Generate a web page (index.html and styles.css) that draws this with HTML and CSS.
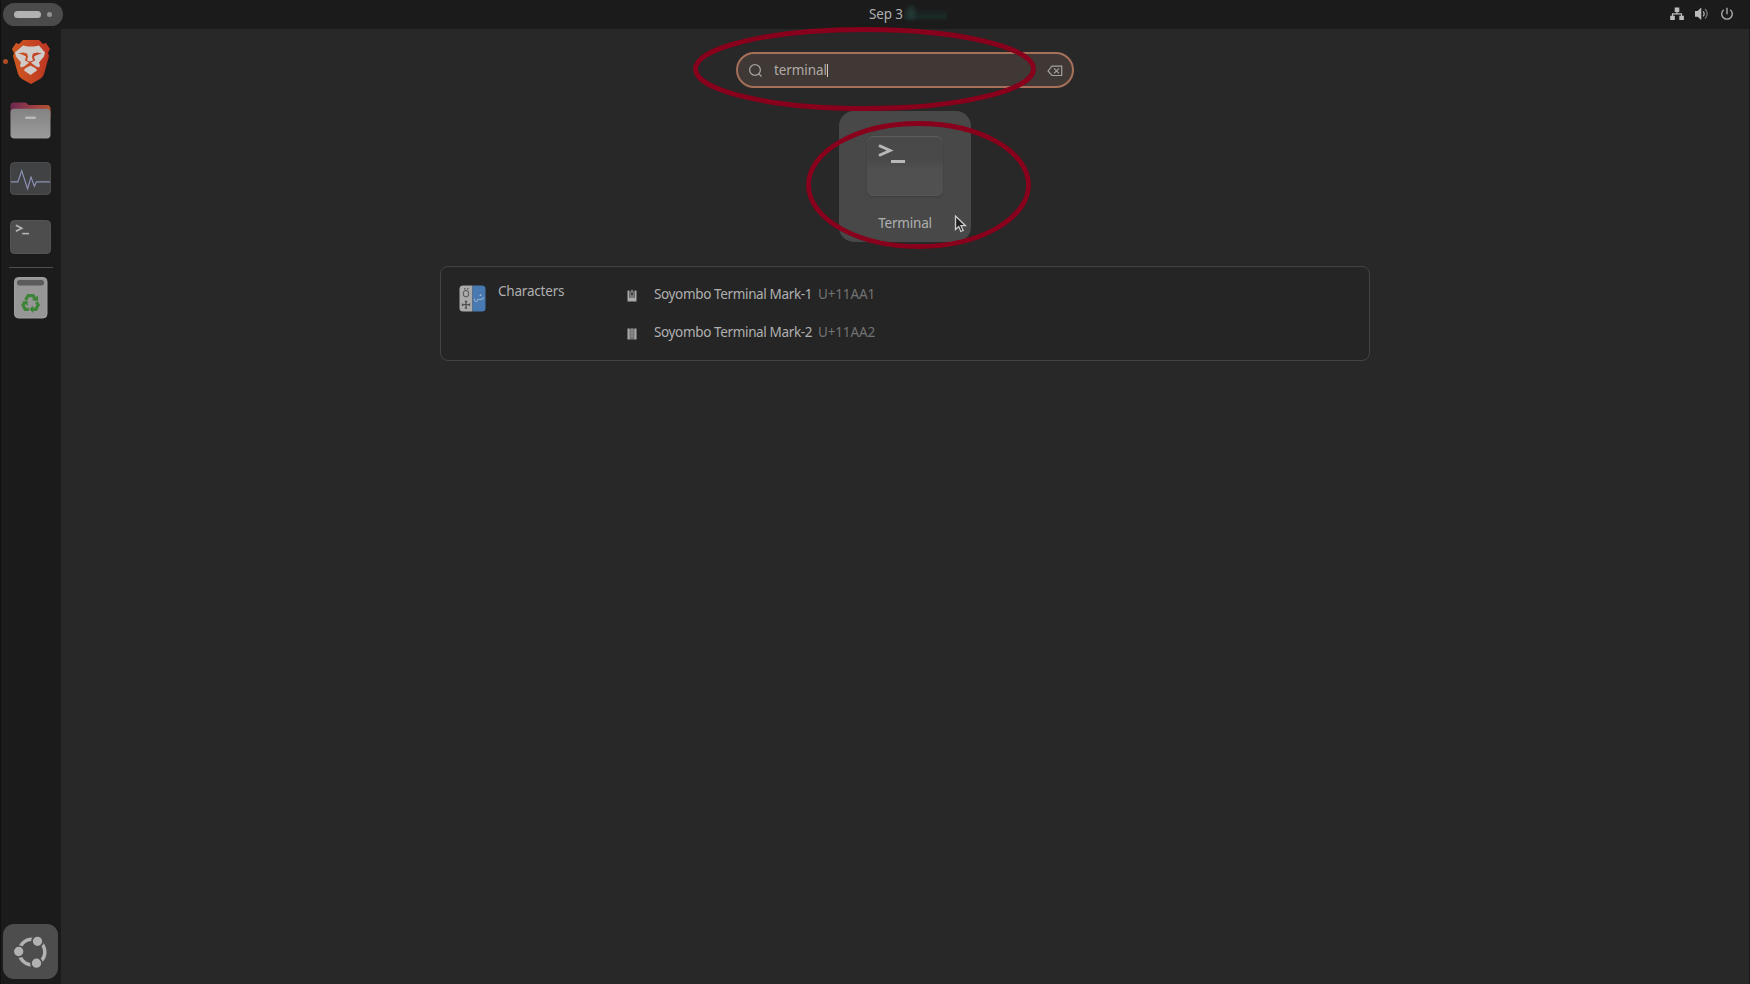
FILE: index.html
```html
<!DOCTYPE html>
<html lang="en">
<head>
<meta charset="utf-8">
<title>Activities</title>
<link rel="stylesheet" href="styles.css">
</head>
<body>
<div class="desktop">
  <header class="topbar">
    <div class="activities"><span class="workspace-current"></span><span class="workspace-dot"></span></div>
    <div class="clock"><span class="date">Sep 3</span><span class="redacted"></span></div>
    <div class="status">
      <svg width="16" height="16" viewBox="0 0 16 16" fill="#bcbcbc"><path d="M5.7 1.5h4.6v4.4H5.7zM1.2 9.7h4.6v4.2H1.2zM10.3 9.7h4.6v4.2h-4.6z"/><path d="M8 5v3M3.5 10V7.8h9V10" fill="none" stroke="#bcbcbc" stroke-width="1.2"/></svg>
      <svg width="16" height="16" viewBox="0 0 16 16"><path d="M1 5h2.6L7.3 1.6v12.3L3.6 10.7H1z" fill="#bcbcbc"/><path d="M9.2 5.3q2 2.5 0 5" fill="none" stroke="#b0b0b0" stroke-width="1.3"/><path d="M11.1 3q4.2 4.8 0 9.6" fill="none" stroke="#777" stroke-width="1.3"/></svg>
      <svg width="16" height="16" viewBox="0 0 16 16" fill="none" stroke="#aaa" stroke-width="1.4"><path d="M8 1.8v6.400M4.700 3.700a5.300 5.300 0 1 0 6.600 0"/></svg>
    </div>
  </header>
  <div class="workspace">
    <nav class="dock">
      <div class="app brave"><span class="running"></span>
        <svg width="38" height="44" viewBox="0 0 38 44"><defs><linearGradient id="flame"><stop offset="0" stop-color="#cf5a22"/><stop offset="1" stop-color="#bd3423"/></linearGradient></defs><path d="M11 0h16l4 4 3-1 4 6-2 4 1 3-5 18q-1 3-4 5l-9 5-9-5q-3-2-4-5L1 16l1-3-2-4 4-6 3 1z" fill="url(#flame)"/><path d="M11 5.500l5 1h6l5-1 6 7-1 4-5 6 1 3-1 2-3-1-4-3-1-1 4-2-1-4 4-2 4-1-5-1-4 1-1 3 1 4-3 1-3-1 1-4-1-3-4-1-5 1 4 1 4 2-1 4 4 2-1 1-4 3-3 1-1-2 1-3-5-6-1-4z" fill="#cfcbc9"/><path d="M13 28.500l5.500-3 5.500 3 1 2-6.500 4.500-6.500-4.500z" fill="#cfcbc9"/></svg></div>
      <div class="app files"><svg width="41" height="37" viewBox="0 0 42 38" preserveAspectRatio="none"><defs><linearGradient id="folder"><stop offset="0" stop-color="#6d2850"/><stop offset=".5" stop-color="#963b45"/><stop offset="1" stop-color="#b6532d"/></linearGradient><linearGradient id="paper" x2="0" y2="1"><stop stop-color="#838383"/><stop offset="1" stop-color="#9b9b9b"/></linearGradient></defs><path d="M.5 16V4Q.5.500 4 .5h11q2 0 3 1.500l1 1h18.500q4 0 4 4v9z" fill="url(#folder)"/><rect x=".5" y="7" width="41" height="30.500" rx="4" fill="url(#paper)"/><rect x="15.500" y="15" width="11" height="2.400" rx="1" fill="#b9b9b9"/></svg></div>
      <div class="app monitor"><svg width="41" height="33" viewBox="0 0 42 34" preserveAspectRatio="none"><rect x=".5" y=".5" width="41" height="33" rx="4" fill="#414244" stroke="#4d4e50"/><path d="M1 20.500h7L12 9l6 18.500 3.500-12L25 25l2-4.500h14" fill="none" stroke="#8d91b4" stroke-width="1.200"/></svg></div>
      <div class="app terminal-app"><svg width="41" height="34" viewBox="0 0 42 35" preserveAspectRatio="none"><rect x=".5" y=".5" width="41" height="34" rx="4" fill="#4d4d4d" stroke="#545454"/><path d="M6 5.500l6 3-6 3" fill="none" stroke="#b7b7b7" stroke-width="1.700"/><path d="M12.500 14h7" stroke="#b7b7b7" stroke-width="1.600"/></svg></div>
      <div class="separator"></div>
      <div class="app trash"><svg width="34" height="42" viewBox="0 0 34 42"><rect x=".5" y=".5" width="32.500" height="40.500" rx="4" fill="#979797" stroke="#a0a0a0"/><rect x="3" y="3" width="27" height="5.500" rx="2.500" fill="#5b5b5b"/><g fill="none" stroke="#3e8438" stroke-width="3.200"><path d="M11.500 23l2.600-4.300h5l1.800 3"/><path d="M22.500 25l1.700 3-2.300 4.300h-3M14.800 32.300h-3.600L9 28.200l1.500-2.700"/></g><g fill="#3e8438"><path d="M17.800 23.200l6.200.8v-5.600zM19.200 28.500v7.500l-3.800-3.700zM8 24.800l5.300-1.200.9 5.200z"/></g></svg></div>
      <div class="show-apps"><svg width="34" height="34" viewBox="0 0 34 34"><circle cx="18" cy="17" r="12.800" fill="none" stroke="#b2b2b2" stroke-width="3.500"/><g fill="#b2b2b2" stroke="#4d4d4d" stroke-width="1.700"><circle cx="23.500" cy="6.300" r="5.500"/><circle cx="4.700" cy="16.500" r="5.500"/><circle cx="22.500" cy="28.200" r="5.500"/></g></svg></div>
    </nav>
    <main class="overview">
      <div class="search">
        <svg width="16" height="16" viewBox="0 0 16 16" fill="none" stroke="#a3a09f" stroke-width="1.300"><circle cx="7" cy="8" r="5.400"/><path d="M10.800 11.800l2.700 2.700"/></svg>
        <span class="query">terminal</span><span class="caret"></span>
        <svg class="clear" width="16" height="12" viewBox="0 0 16 12" fill="none" stroke="#a3a09f" stroke-width="1.200"><path d="M5 1.200h9.700v9.300H5L1 5.900zM7 3.300l5 5M12 3.300l-5 5"/></svg>
      </div>
      <div class="result-tile">
        <div class="terminal-icon"><svg width="76" height="60" viewBox="0 0 76 60"><path d="M12 9.500l11 5-11 5" fill="none" stroke="#b8b8b8" stroke-width="3"/><path d="M24 25.500h14" stroke="#b8b8b8" stroke-width="3"/></svg></div>
        <span class="tile-label">Terminal</span>
      </div>
      <section class="provider">
        <svg class="characters-icon" width="27" height="27" viewBox="0 0 27 27"><path d="M4 .5h9.500v26H4Q.5 26.500.5 23V4Q.5.500 4 .5z" fill="#aaa"/><path d="M13.500.5H23q3.500 0 3.500 3.500v19q0 3.500-3.500 3.500h-9.500z" fill="#4879b0"/><ellipse cx="7" cy="8.700" rx="2.800" ry="3.200" fill="none" stroke="#505050"/><path d="M5 3.800h1.500M8 3.800h1.500M7 16v7.500M3 19.700h8M5.800 16.500h2.400M5.800 23h2.400M3.500 18.500V21M10.500 18.500V21" stroke="#505050" stroke-width="1.300"/><path d="M15.300 13.500q-.5 3 1.700 3 2 0 2-2.500 1 1.500 2 0 1 1.300 2 0 1.500 1 1.300-1.800M20.500 10.500h2M21.500 9v1" fill="none" stroke="#9ab2d1"/></svg>
        <h2 class="provider-name">Characters</h2>
        <div class="results">
          <div class="result"><svg width="10" height="13" viewBox="0 0 10 13"><path d="M.5 1.500h2V9h5V1.500h2v11h-9z" fill="#a9a9a9"/><path d="M5 0L3 3v6h4V3z" fill="#777"/><path d="M5 2.500L3.800 6h2.400z" fill="#333"/></svg><span class="result-name">Soyombo Terminal Mark-1</span><span class="code">U+11AA1</span></div>
          <div class="result"><svg width="10" height="13" viewBox="0 0 10 13"><path d="M.5 1.500h2.300v11H.5zM7.200 1.500h2.300v11H7.200z" fill="#a9a9a9"/><path d="M3 1.500h4v11H3z" fill="#747474"/><path d="M5 1.500v3M4 6h2M4 9h2" stroke="#a0a0a0"/></svg><span class="result-name">Soyombo Terminal Mark-2</span><span class="code">U+11AA2</span></div>
        </div>
      </section>
    </main>
  </div>
  <svg class="annotations" width="1750" height="984" viewBox="0 0 1750 984" fill="none" stroke="#88001b"><ellipse cx="864.500" cy="69" rx="169" ry="39.500" stroke-width="4.800"/><ellipse cx="918.500" cy="185" rx="110" ry="61.500" stroke-width="4.800"/></svg>
  <svg class="pointer" width="14" height="19" viewBox="0 0 14 19"><path d="M1.500 1v13.500l3.200-3 2.200 5 2.300-1-2.200-4.800h4.500z" fill="#202020" stroke="#ccc" stroke-width="1.300"/></svg>
</div>
</body>
</html>
```
FILE: styles.css
```css
* { box-sizing: border-box; }
body { margin: 0; background: #282828; color: #b0b0b0; font: 13.5px/20px "Noto Sans", sans-serif; }
svg { display: block; flex: none; }
.desktop { position: relative; width: 1750px; height: 984px; overflow: hidden; display: flex; flex-direction: column; border-left: 1px solid #101010; border-right: 1px solid #181818; }
.topbar { height: 29px; background: #1b1b1b; display: grid; grid-template-columns: 866px 1fr auto; align-items: start; flex: none; }
.activities { width: 60px; height: 23px; margin: 3px 0 0 2px; border-radius: 12px; background: #4b4b4b; display: flex; align-items: center; padding-left: 11px; gap: 6px; }
.workspace-current { width: 27px; height: 7px; border-radius: 4px; background: #b2b2b2; }
.workspace-dot { width: 5px; height: 5px; border-radius: 50%; background: #929292; }
.clock { display: flex; padding: 4px 0 0 2px; }
.date { width: 35px; letter-spacing: -.15px; white-space: nowrap; }
.redacted { width: 43px; height: 16px; margin-top: 1px; background: radial-gradient(ellipse 7px 11px at 7px 8px, #2a4a46, transparent), linear-gradient(to bottom, transparent 20%, #19332e 75%, transparent); opacity: .7; }
.status { display: flex; gap: 9px; padding: 6px 14px 0 0; }
.workspace { display: flex; flex: 1; }
.dock { width: 60px; background: #1b1b1b; display: flex; flex-direction: column; align-items: center; padding: 11px 0 5px; }
.app { position: relative; }
.brave { margin-bottom: 18px; }
.running { position: absolute; left: -9px; top: 19px; width: 5px; height: 5px; border-radius: 50%; background: #ad4d25; }
.files { margin: 0 1px 23px 0; }
.monitor { margin: 0 1px 25px 0; }
.terminal-app { margin: 0 1px 13px 0; }
.separator { width: 44px; height: 1px; background: #4e4e4e; margin-bottom: 9px; }
.show-apps { width: 55px; height: 55px; margin-top: auto; margin-right: 1px; padding: 11px 0 0 10.5px; border-radius: 11px; background: #4d4d4d; }
.overview { flex: 1; display: flex; flex-direction: column; align-items: center; padding: 23px 0 0; }
.search { width: 338px; height: 36px; border: 2px solid #a56f5a; border-radius: 18px; background: #403835; display: flex; align-items: center; padding: 0 9px 0 10px; }
.query { margin: -1px 0 0 10px; color: #b0aaa7; letter-spacing: -.1px; }
.caret { width: 1px; height: 13px; background: #d0cac6; }
.clear { margin: 2px 0 0 auto; }
.result-tile { width: 132px; height: 131px; margin-top: 23px; border-radius: 15px; background: #484848; display: flex; flex-direction: column; align-items: center; padding-top: 25px; }
.terminal-icon { width: 76px; height: 60px; border-radius: 7px; background: linear-gradient(#494949 0 40%, #505050 56%); box-shadow: 0 1px 2px #3b3b3b, inset 0 1px #5d5d5d, inset 0 -1px #575757; }
.tile-label { margin-top: 17px; letter-spacing: -.2px; }
.provider { width: 930px; height: 95px; margin-top: 24px; border: 1px solid #434343; border-radius: 8px; background: #252525; display: flex; align-items: flex-start; padding-left: 18px; }
.characters-icon { margin-top: 18px; }
.provider-name { margin: 14px 0 0 12px; width: 129px; font-size: 13.5px; line-height: 20px; font-weight: 400; letter-spacing: -.2px; }
.results { display: flex; flex-direction: column; gap: 18px; padding-top: 17px; }
.result { display: flex; align-items: center; white-space: nowrap; }
.result-name { margin-left: 17px; width: 164px; letter-spacing: -.36px; }
.result svg { margin-top: 2px; }
.code { color: #727272; letter-spacing: -.15px; }
.annotations { position: absolute; left: -1px; top: 0; }
.pointer { position: absolute; left: 953px; top: 215px; }
```
